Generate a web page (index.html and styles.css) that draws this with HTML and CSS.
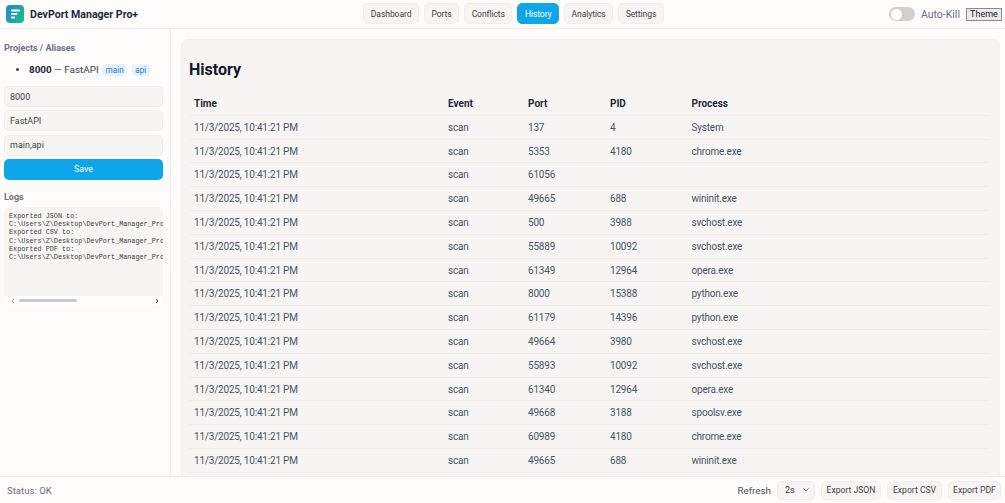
FILE: index.html
```html
<!DOCTYPE html>
<html lang="en">
<head>
<meta charset="utf-8">
<title>DevPort Manager Pro+</title>
<link rel="stylesheet" href="styles.css">
</head>
<body>
<div class="app">
  <header class="topbar">
    <div class="brand">
      <svg class="logo" width="18" height="18" viewBox="0 0 18 18">
        <defs><linearGradient id="lg" x1="0" y1="0" x2="1" y2="0.6"><stop offset="0" stop-color="#2a84d8"/><stop offset="1" stop-color="#18b98c"/></linearGradient></defs>
        <rect width="18" height="18" rx="4" fill="url(#lg)"/>
        <rect x="5" y="4.5" width="9" height="2" rx="1" fill="#fff"/>
        <rect x="5" y="8" width="6.5" height="2" rx="1" fill="#fff"/>
        <rect x="5" y="11.5" width="4" height="2" rx="1" fill="#fff"/>
      </svg>
      <span class="brand-name">DevPort Manager Pro+</span>
    </div>
    <nav class="tabs">
      <button class="tab">Dashboard</button>
      <button class="tab">Ports</button>
      <button class="tab">Conflicts</button>
      <button class="tab active">History</button>
      <button class="tab">Analytics</button>
      <button class="tab">Settings</button>
    </nav>
    <div class="top-actions">
      <span class="toggle"><span class="knob"></span></span>
      <span class="autokill">Auto-Kill</span>
      <button class="theme">Theme</button>
    </div>
  </header>
  <div class="body">
    <aside class="sidebar">
      <h4 class="side-title">Projects / Aliases</h4>
      <ul class="aliases">
        <li><b>8000</b> — FastAPI <span class="tag">main</span> <span class="tag">api</span></li>
      </ul>
      <div class="field">8000</div>
      <div class="field">FastAPI</div>
      <div class="field">main,api</div>
      <button class="save">Save</button>
      <h4 class="side-title logs-title">Logs</h4>
      <div class="logs">
        <pre class="log-text">Exported JSON to:
C:\Users\Z\Desktop\DevPort_Manager_Pro
Exported CSV to:
C:\Users\Z\Desktop\DevPort_Manager_Pro
Exported PDF to:
C:\Users\Z\Desktop\DevPort_Manager_Pro</pre>
        <div class="hscroll">
          <svg width="6" height="6" viewBox="0 0 6 6"><path d="M4 1 2 3l2 2" fill="none" stroke="#999" stroke-width="1"/></svg>
          <span class="track"><span class="thumb"></span></span>
          <svg width="6" height="6" viewBox="0 0 6 6"><path d="M2 1l2 2-2 2" fill="none" stroke="#444" stroke-width="1"/></svg>
        </div>
      </div>
    </aside>
    <main class="main">
      <section class="card">
        <h2 class="title">History</h2>
        <table class="table">
          <thead><tr><th class="c1">Time</th><th class="c2">Event</th><th class="c3">Port</th><th class="c4">PID</th><th>Process</th></tr></thead>
          <tbody>
            <tr><td>11/3/2025, 10:41:21 PM</td><td>scan</td><td>137</td><td>4</td><td>System</td></tr>
            <tr><td>11/3/2025, 10:41:21 PM</td><td>scan</td><td>5353</td><td>4180</td><td>chrome.exe</td></tr>
            <tr><td>11/3/2025, 10:41:21 PM</td><td>scan</td><td>61056</td><td></td><td></td></tr>
            <tr><td>11/3/2025, 10:41:21 PM</td><td>scan</td><td>49665</td><td>688</td><td>wininit.exe</td></tr>
            <tr><td>11/3/2025, 10:41:21 PM</td><td>scan</td><td>500</td><td>3988</td><td>svchost.exe</td></tr>
            <tr><td>11/3/2025, 10:41:21 PM</td><td>scan</td><td>55889</td><td>10092</td><td>svchost.exe</td></tr>
            <tr><td>11/3/2025, 10:41:21 PM</td><td>scan</td><td>61349</td><td>12964</td><td>opera.exe</td></tr>
            <tr><td>11/3/2025, 10:41:21 PM</td><td>scan</td><td>8000</td><td>15388</td><td>python.exe</td></tr>
            <tr><td>11/3/2025, 10:41:21 PM</td><td>scan</td><td>61179</td><td>14396</td><td>python.exe</td></tr>
            <tr><td>11/3/2025, 10:41:21 PM</td><td>scan</td><td>49664</td><td>3980</td><td>svchost.exe</td></tr>
            <tr><td>11/3/2025, 10:41:21 PM</td><td>scan</td><td>55893</td><td>10092</td><td>svchost.exe</td></tr>
            <tr><td>11/3/2025, 10:41:21 PM</td><td>scan</td><td>61340</td><td>12964</td><td>opera.exe</td></tr>
            <tr><td>11/3/2025, 10:41:21 PM</td><td>scan</td><td>49668</td><td>3188</td><td>spoolsv.exe</td></tr>
            <tr><td>11/3/2025, 10:41:21 PM</td><td>scan</td><td>60989</td><td>4180</td><td>chrome.exe</td></tr>
            <tr><td>11/3/2025, 10:41:21 PM</td><td>scan</td><td>49665</td><td>688</td><td>wininit.exe</td></tr>
          </tbody>
        </table>
      </section>
    </main>
  </div>
  <footer class="footer">
    <span class="status">Status: OK</span>
    <div class="foot-actions">
      <span class="refresh">Refresh</span>
      <div class="select">2s
        <svg width="8" height="6" viewBox="0 0 8 6"><path d="M1.5 1.5 4 4 6.5 1.5" fill="none" stroke="#777" stroke-width="1"/></svg>
      </div>
      <button class="btn btn-json">Export JSON</button>
      <button class="btn btn-csv">Export CSV</button>
      <button class="btn btn-pdf">Export PDF</button>
    </div>
  </footer>
</div>
</body>
</html>
```
FILE: styles.css
```css
* { box-sizing: border-box; }
html, body { margin: 0; height: 100%; overflow: hidden; }
body { font-family: Roboto, "Noto Sans", sans-serif; font-size: 10px; color: #374151; background: #fdfcfa; }
.app { display: grid; grid-template-rows: 29px 1fr 27px; height: 503px; }
.topbar { display: flex; justify-content: space-between; align-items: center; padding: 0 3px 0 6px; border-bottom: 1px solid #eeedeb; }
.brand { display: flex; align-items: center; gap: 6px; }
.logo { display: block; }
.brand-name { font-size: 10.6px; font-weight: 700; color: #1f2937; }
.tabs { display: flex; gap: 5px; padding-bottom: 1px; }
.tab { height: 21px; padding: 0 6.5px; border: 1px solid #efeeec; border-radius: 5px; background: #f6f5f3; font: 8.6px Roboto, sans-serif; letter-spacing: -0.1px; color: #444; }
.tab.active { background: #0ea5e9; border-color: #0ea5e9; color: #fff; }
.top-actions { display: flex; align-items: center; justify-content: flex-end; }
.toggle { width: 26px; height: 14px; border-radius: 7px; background: #cfcfcf; padding: 1.5px 2px; display: flex; margin-right: 6px; }
.knob { width: 11px; height: 11px; border-radius: 50%; background: #fff; }
.autokill { font-size: 10.5px; color: #6b7280; margin-right: 6px; }
.theme { height: 13px; width: 36px; padding: 0; border: 1px solid #8a8a8a; background: #ebebeb; font: 9px Roboto, sans-serif; color: #222; }
.body { display: grid; grid-template-columns: 171px 1fr; min-height: 0; }
.sidebar { border-right: 1px solid #eeedeb; padding: 13px 7px 0 4px; overflow: hidden; }
.side-title { margin: 0; font-size: 9px; line-height: 12px; font-weight: 700; color: #6b7280; }
.aliases { margin: 9px 0 9px; padding: 0 0 0 25px; font-size: 9.9px; line-height: 14px; white-space: nowrap; }
.aliases b { color: #1f2937; font-weight: 700; }
.tag { display: inline-block; font-size: 8.2px; line-height: 12px; padding: 0 3.5px; margin-left: 1px; border-radius: 4px; background: #e5f2fd; color: #2c79c0; }
.tag + .tag { margin-left: 2px; }
.field { height: 21px; margin-bottom: 3.3px; padding: 0 5px; display: flex; align-items: center; background: #f6f5f3; border: 1px solid #efeeec; border-radius: 5px; font-size: 9px; color: #444; }
.save { display: block; width: 100%; height: 21px; border: 0; border-radius: 5px; background: #0ea5e9; color: #fff; font: 9px Roboto, sans-serif; }
.logs-title { margin-top: 11px; }
.logs { margin-top: 4px; height: 99px; border-radius: 5px; background: #f6f5f3; overflow: hidden; display: flex; flex-direction: column; }
.log-text { flex: 1; margin: 0; padding: 5px 0 0 5px; overflow: hidden; font: 6.8px/8.3px "Liberation Mono", monospace; color: #3d3d3d; }
.hscroll { height: 10px; background: #fff; display: flex; align-items: center; gap: 3px; padding: 0 3px 0 6px; }
.track { flex: 1; display: block; }
.thumb { display: block; width: 58px; height: 3px; border-radius: 2px; background: #c3cad2; }
.main { padding: 10px 5px 0 10px; overflow: hidden; min-width: 0; }
.card { background: #f6f5f3; border: 1px solid #f2f1ef; border-radius: 7px 7px 0 0; padding: 20px 7px 0 7px; height: 460px; overflow: hidden; }
.title { margin: 0 0 11.6px; font-size: 16px; line-height: 20px; font-weight: 700; color: #111827; }
.table { width: 800px; border-collapse: collapse; table-layout: fixed; }
.table th, .table td { height: 23.8px; padding: 0 5px; border-bottom: 1px solid #eeedeb; text-align: left; font-size: 10px; letter-spacing: -0.2px; white-space: nowrap; }
.table th { font-weight: 700; letter-spacing: 0; color: #1f2937; }
.table td { color: #4b5563; }
.c1 { width: 254px; }
.c2 { width: 80px; }
.c3 { width: 82px; }
.c4 { width: 81.5px; }
.footer { display: flex; justify-content: space-between; align-items: center; padding: 0 4px 0 7px; background: #fdfcfa; border-top: 1px solid #eeedeb; }
.status { font-size: 9.6px; color: #6b7280; }
.foot-actions { display: flex; align-items: center; gap: 6px; }
.refresh { font-size: 9.8px; color: #555; }
.select { width: 38px; height: 19px; padding: 0 4px 0 7px; display: flex; align-items: center; justify-content: space-between; background: #f6f5f3; border: 1px solid #efeeec; border-radius: 5px; font-size: 9px; color: #444; }
.btn { height: 19px; padding: 0; border: 1px solid #efeeec; border-radius: 5px; background: #f6f5f3; font: 8.6px Roboto, sans-serif; color: #444; }
.btn-json { width: 60px; }
.btn-csv { width: 55px; }
.btn-pdf { width: 53px; }
```
